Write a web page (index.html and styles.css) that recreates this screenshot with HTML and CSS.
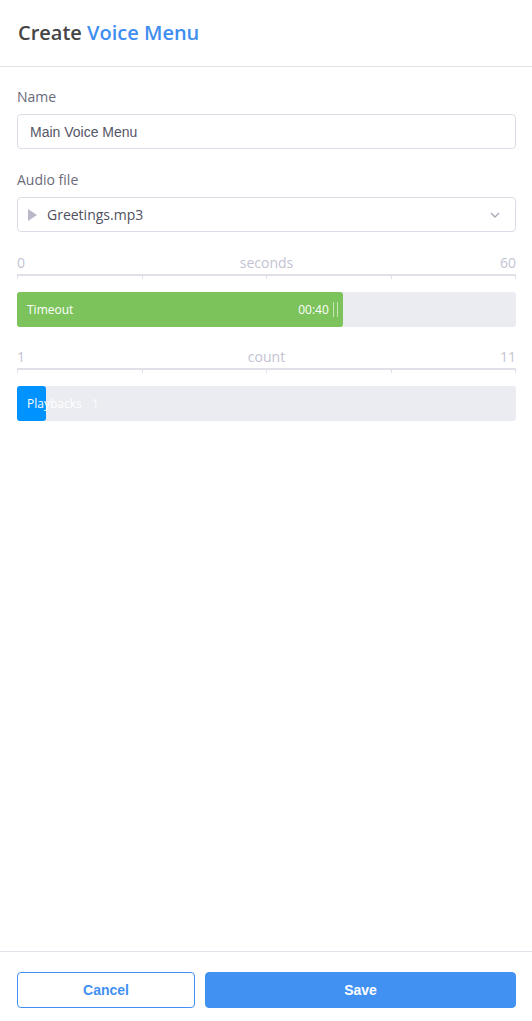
FILE: index.html
```html
<!doctype html>
<html>
<head>
<meta charset="utf-8">
<link rel="stylesheet" href="styles.css">
</head>
<body>
<div class="panel">
  <div class="head">
    <h1>Create <span class="accent">Voice Menu</span></h1>
  </div>

  <div class="body">
    <label class="lbl">Name</label>
    <div class="field">Main Voice Menu</div>

    <label class="lbl">Audio file</label>
    <div class="field select">
      <span class="play"></span>
      <span class="fname">Greetings.mp3</span>
      <svg class="chev" width="12" height="8" viewBox="0 0 12 8"><path d="M2 2 L6 6 L10 2" fill="none" stroke="#a9a9b8" stroke-width="1.4"/></svg>
    </div>

    <div class="scale">
      <span>0</span><span class="mid">seconds</span><span class="end">60</span>
    </div>
    <div class="ticks"><i></i><i></i><i></i><i></i><i></i></div>
    <div class="track">
      <div class="fill green" style="width:65.3%">
        <span class="name">Timeout</span>
        <span class="val">00:40</span>
        <span class="grip"></span>
      </div>
    </div>

    <div class="scale">
      <span>1</span><span class="mid">count</span><span class="end">11</span>
    </div>
    <div class="ticks"><i></i><i></i><i></i><i></i><i></i></div>
    <div class="track">
      <div class="fill blue" style="width:29px"></div>
      <span class="name over">Playbacks</span>
      <span class="num">1</span>
    </div>
  </div>

  <div class="foot">
    <button class="btn ghost">Cancel</button>
    <button class="btn primary">Save</button>
  </div>
</div>
</body>
</html>
```

FILE: styles.css
```css
html, body {
    margin: 0;
    height: 100%;
}
body {
    font-family: "Open Sans", "Liberation Sans", sans-serif;
    color: #555566;
    background: #ffffff;
}
.panel {
    display: flex;
    flex-direction: column;
    height: 100%;
}
.head {
    height: 67px;
    border-bottom: 1px solid #e2e2ea;
    box-sizing: border-box;
    padding: 0 18px 1px;
    display: flex;
    align-items: center;
}
.head h1 {
    margin: 0;
    font-size: 20px;
    font-weight: 600;
    color: #454545;
}
.accent { color: #3f8ef0; }

.body {
    flex: 1;
    padding: 21px 16px 0 17px;
}
.lbl {
    display: block;
    font-size: 14px;
    color: #6a6a7a;
    line-height: 18px;
    margin-bottom: 8px;
}
.field {
    height: 35px;
    box-sizing: border-box;
    border: 1px solid #dcdce6;
    border-radius: 4px;
    padding: 0 12px;
    font-size: 14px;
    color: #555566;
    display: flex;
    align-items: center;
    margin-bottom: 22px;
    font-family: "Liberation Sans", Arial, sans-serif;
}
.select {
    font-family: "Open Sans", sans-serif;
    font-size: 14px;
    color: #505060;
}
.play {
    width: 0;
    height: 0;
    border-left: 9px solid #b8b8c8;
    border-top: 6px solid transparent;
    border-bottom: 6px solid transparent;
    margin: 0 10px 0 -2px;
}
.fname { flex: 1; }
.chev { margin-right: 2px; }

.scale {
    display: grid;
    grid-template-columns: 1fr auto 1fr;
    font-size: 14px;
    color: #c3c3d2;
    line-height: 18px;
    margin-top: 20px;
}
.scale .end { text-align: right; }
.ticks {
    display: flex;
    justify-content: space-between;
    border-top: 2px solid #e0e0e8;
    height: 3px;
    margin-top: 2px;
}
.ticks i {
    width: 1px;
    background: #e0e0e8;
}
.track {
    position: relative;
    margin-top: 13px;
    height: 35px;
    background: #ebecf1;
    border-radius: 3px;
    display: flex;
    align-items: center;
    font-size: 12px;
    color: #ffffff;
}
.track + .scale { margin-top: 21px; }
.fill {
    height: 100%;
    border-radius: 3px;
    box-sizing: border-box;
    display: flex;
    align-items: center;
    padding: 0 5px 0 10px;
}
.green { background: #7bc35a; }
.blue { background: #0093ff; }
.fill .name { flex: 1; }
.val { margin-right: 4px; }
.grip {
    width: 3px;
    height: 15px;
    border-left: 1px solid #c5e6b6;
    border-right: 1px solid #c5e6b6;
}
.over {
    position: absolute;
    left: 10px;
    top: 9px;
}
.num {
    position: absolute;
    left: 75px;
    top: 9px;
    color: #ffffff;
    opacity: 0.8;
}

.foot {
    border-top: 1px solid #e2e2ea;
    padding: 20px 16px 13px 17px;
    display: flex;
    gap: 10px;
}
.btn {
    height: 36px;
    border-radius: 4px;
    font-family: "Liberation Sans", Arial, sans-serif;
    font-weight: bold;
    font-size: 14px;
}
.ghost {
    width: 178px;
    background: #ffffff;
    border: 1px solid #4191f2;
    color: #4191f2;
}
.primary {
    flex: 1;
    background: #4191f2;
    border: 1px solid #4191f2;
    color: #ffffff;
}
```
